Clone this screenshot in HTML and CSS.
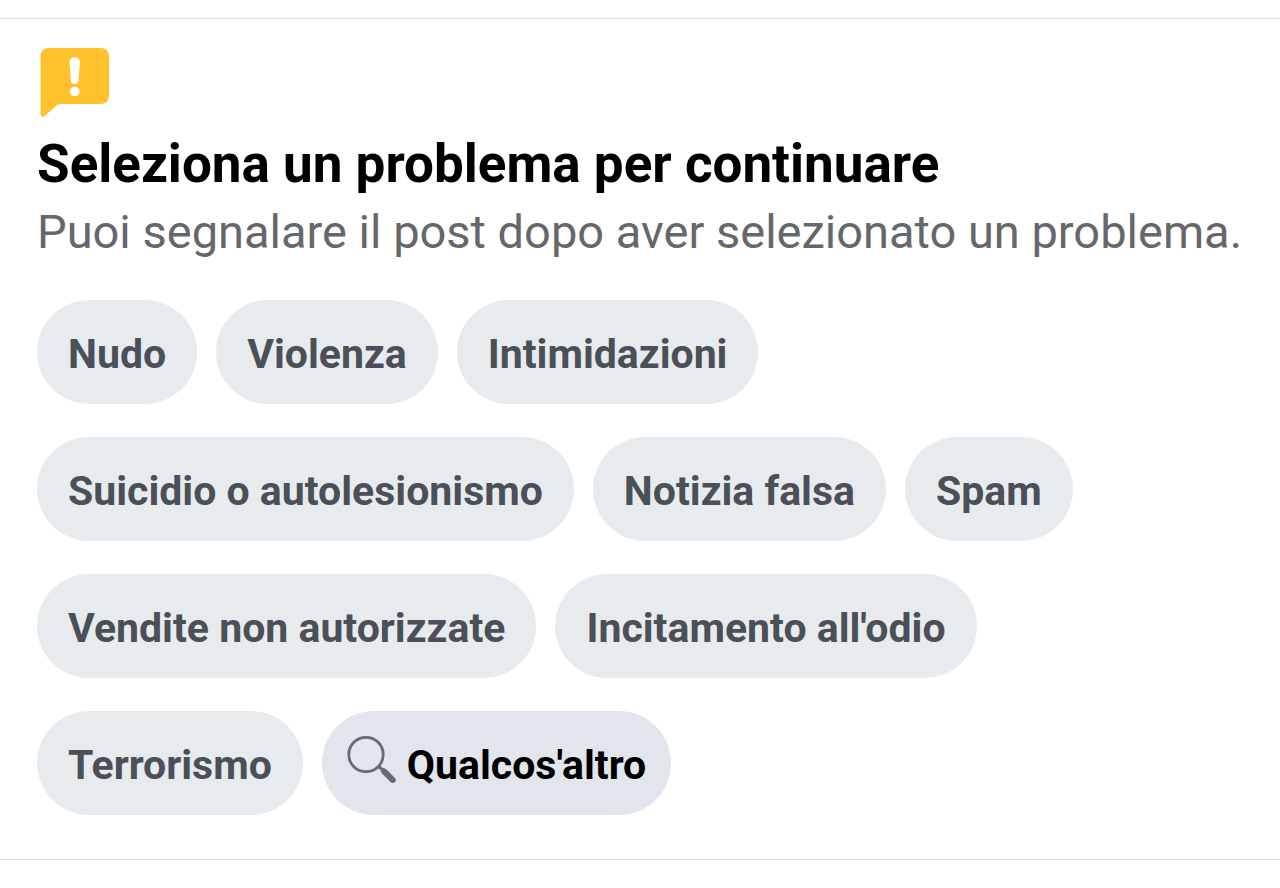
FILE: index.html
```html
<!DOCTYPE html>
<html lang="it">
<head>
    <meta charset="UTF-8">
    <meta name="viewport" content="width=device-width, initial-scale=1.0">
    <title>Seleziona un problema</title>
    <link rel="stylesheet" href="styles.css">
</head>
<body>
    <main class="report">
        <svg class="report-icon" viewBox="0 0 72 72" aria-hidden="true">
            <path fill="#ffc22d" d="M10.500 1H63a8 8 0 0 1 8 8v40a8 8 0 0 1-8 8H22q-2 0-4 2L6.500 69q-4 2-4-2V9a8 8 0 0 1 8-8z"/>
            <path fill="#fff" d="M31.500 15.500c0-7 10.400-7 10.400 0L40.500 34c-.4 4-7.200 4-7.600 0z"/>
            <circle fill="#fff" cx="36.700" cy="44.500" r="4.800"/>
        </svg>
        <h1>Seleziona un problema per continuare</h1>
        <p class="subtitle">Puoi segnalare il post dopo aver selezionato un problema.</p>

        <div class="tags">
            <div class="row">
                <button type="button" class="tag">Nudo</button>
                <button type="button" class="tag">Violenza</button>
                <button type="button" class="tag">Intimidazioni</button>
            </div>
            <div class="row">
                <button type="button" class="tag">Suicidio o autolesionismo</button>
                <button type="button" class="tag">Notizia falsa</button>
                <button type="button" class="tag">Spam</button>
            </div>
            <div class="row">
                <button type="button" class="tag">Vendite non autorizzate</button>
                <button type="button" class="tag">Incitamento all'odio</button>
            </div>
            <div class="row">
                <button type="button" class="tag">Terrorismo</button>
                <button type="button" class="tag tag-other">
                    <svg class="search-icon" viewBox="0 0 50 60" aria-hidden="true">
                        <circle cx="19" cy="19.500" r="17.200" fill="none" stroke="#666a73" stroke-width="2.800"/>
                        <path fill="#666a73" d="M29.500 32l2.500-2.500 3.500 3.200q2 0 4 1.800l8 8q2.500 2.500.5 4.500t-4.500 0l-8-8q-1.800-2-2-4z"/>
                    </svg>
                    Qualcos'altro
                </button>
            </div>
        </div>
    </main>
</body>
</html>
```
FILE: styles.css
```css
* {
    margin: 0;
    padding: 0;
    box-sizing: border-box;
}

body {
    background: #fff;
    font-family: Roboto, sans-serif;
    color: #000;
}

.report {
    margin-top: 18px;
    padding: 28px 37px 44px;
    border-top: 1px solid #dcdcdc;
    border-bottom: 1px solid #dcdcdc;
}

.report-icon {
    display: block;
    width: 72px;
    height: 72px;
    margin-left: 1px;
}

h1 {
    margin-top: 12px;
    font-size: 53px;
    font-weight: 700;
    line-height: 66px;
}

.subtitle {
    color: #65676b;
    font-size: 47px;
    line-height: 70px;
}

.tags {
    display: flex;
    flex-direction: column;
    gap: 33px;
    margin-top: 33px;
}

.row {
    display: flex;
    flex-wrap: wrap;
    gap: 19px;
}

.tag {
    display: flex;
    align-items: center;
    height: 104px;
    padding: 4px 31px 0;
    border: none;
    border-radius: 52px;
    background: #e8ebee;
    color: #4b4f58;
    font-family: inherit;
    font-size: 41px;
    font-weight: 700;
    cursor: pointer;
}

.tag-other {
    gap: 10px;
    padding: 4px 25px 0;
    background: #e2e5eb;
    color: #000;
}

.search-icon {
    width: 50px;
    height: 60px;
}
```
